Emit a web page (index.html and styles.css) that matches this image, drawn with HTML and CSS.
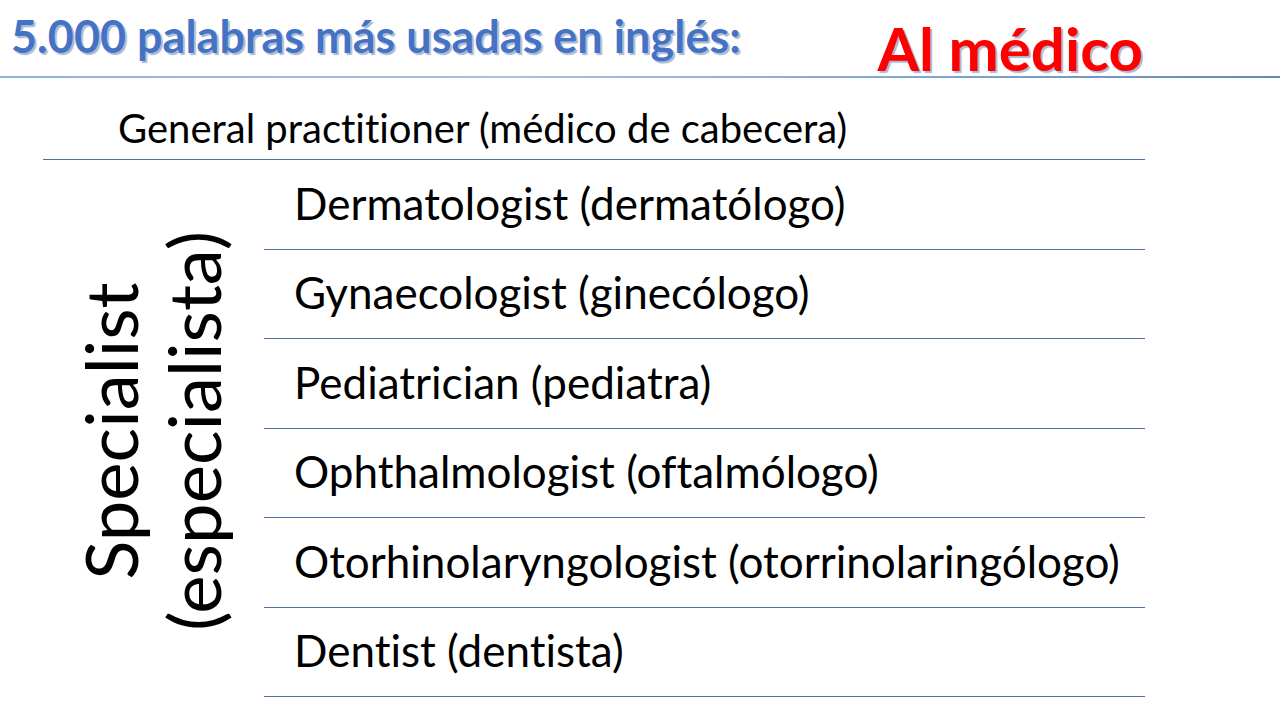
FILE: index.html
```html
<!DOCTYPE html>
<html lang="es">
<head>
<meta charset="utf-8">
<title>Al médico</title>
<link rel="stylesheet" href="styles.css">
</head>
<body>
<div class="slide">
  <header class="header">
    <h1 class="title">5.000 palabras más usadas en inglés:</h1>
    <h2 class="topic">Al médico</h2>
  </header>
  <div class="rule"></div>
  <main class="table">
    <div class="general">General practitioner (médico de cabecera)</div>
    <div class="specialists">
      <div class="side">
        <div class="side-text">Specialist<br>(especialista)</div>
      </div>
      <ul class="list">
        <li class="row">Dermatologist (dermatólogo)</li>
        <li class="row">Gynaecologist (ginecólogo)</li>
        <li class="row">Pediatrician (pediatra)</li>
        <li class="row">Ophthalmologist (oftalmólogo)</li>
        <li class="row">Otorhinolaryngologist (otorrinolaringólogo)</li>
        <li class="row">Dentist (dentista)</li>
      </ul>
    </div>
  </main>
</div>
</body>
</html>
```

FILE: styles.css
```css
html, body {
  margin: 0;
  padding: 0;
  background: #ffffff;
}

.slide {
  width: 1280px;
  height: 720px;
  overflow: hidden;
  font-family: Lato, "Open Sans", "Liberation Sans", sans-serif;
  font-variant-ligatures: none;
  font-feature-settings: "liga" 0, "clig" 0;
  color: #000000;
}

.header {
  height: 76px;
  display: flex;
  align-items: flex-start;
  justify-content: space-between;
  box-sizing: border-box;
  padding: 0 137px 0 11px;
}

.title {
  margin: 14px 0 0 0;
  font-size: 45px;
  font-weight: 700;
  line-height: 1;
  color: #4472c4;
  text-shadow: 0 0 1px #ffffff, 2px 2px 1px #a9b6cf;
}

.topic {
  margin: 18px 0 0 0;
  font-size: 60px;
  font-weight: 700;
  line-height: 1;
  color: #ff0000;
  text-shadow: 2px 2px 1px #aab6d2;
}

.rule {
  height: 2px;
  background: linear-gradient(90deg, #8fb2da 0%, #a4c2e2 40%, #7ea2cd 75%, #6489b8 100%);
}

.table {
  margin-left: 43px;
  width: 1102px;
}

.general {
  height: 82px;
  box-sizing: border-box;
  padding-left: 75px;
  padding-top: 26px;
  font-size: 40px;
  line-height: 1.2;
  border-bottom: 1px solid #4f71a6;
}

.specialists {
  display: flex;
}

.side {
  width: 221px;
  display: flex;
  align-items: center;
  justify-content: center;
}

.side-text {
  writing-mode: vertical-rl;
  transform: rotate(180deg);
  text-align: center;
  font-size: 72.5px;
  line-height: 83px;
  white-space: nowrap;
  margin-top: 4px;
  margin-right: 6px;
}

.list {
  list-style: none;
  margin: 0;
  padding: 0;
  flex: 1;
}

.row {
  height: 89.5px;
  box-sizing: border-box;
  display: flex;
  align-items: center;
  padding-left: 30px;
  padding-bottom: 3px;
  font-size: 44px;
  border-bottom: 1px solid #4f71a6;
}
```
